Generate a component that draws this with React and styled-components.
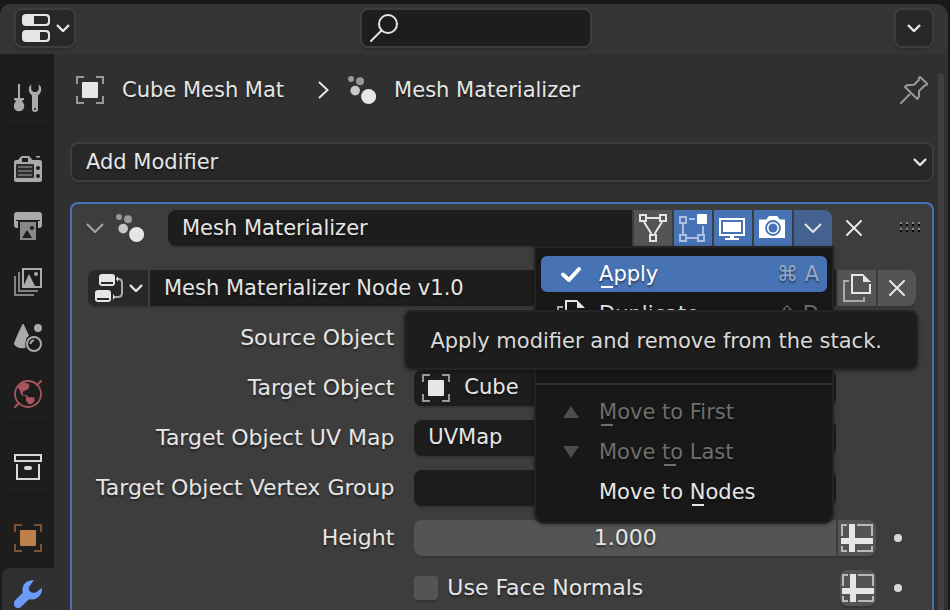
import React from 'react';
import styled, { createGlobalStyle, css } from 'styled-components';

const c = {
  window: '#181818',
  header: '#353535',
  body: '#303030',
  tabs: '#1d1d1d',
  panel: '#3d3d3d',
  menuBg: '#282828',
  field: '#1d1d1d',
  button: '#545454',
  blue: '#4772b3',
  text: '#e6e6e6',
  dim: '#999999',
};

const Global = createGlobalStyle`
  * { box-sizing: border-box; }
  html, body { margin: 0; background: ${c.window}; }
  body, button, input, select {
    font-family: "DejaVu Sans", sans-serif;
    font-size: 21px;
    line-height: 28px;
    color: ${c.text};
  }
  button, input, select { margin: 0; padding: 0; border: 0; border-radius: 0; outline: 0; background: none; }
  button { display: flex; align-items: center; justify-content: center; }
  svg { display: block; flex: none; }
`;

const textShadow = css`text-shadow: 0 2px 2px rgba(0, 0, 0, 0.45);`;
const dropLine = css`box-shadow: 0 2px 0 rgba(0, 0, 0, 0.14);`;

/* ---------- page frame ---------- */
const Window = styled.div`
  height: 100vh;
  overflow: hidden;
  padding: 4px 2px 0 0;
  display: flex;
  flex-direction: column;
`;
const EditorHeader = styled.header`
  display: grid;
  grid-template-columns: 1fr auto 1fr;
  align-items: start;
  height: 50px;
  flex: none;
  padding: 4px 14px 0;
  background: ${c.header};
  border-radius: 10px 12px 0 0;
`;
const HeaderButton = styled.button`
  justify-self: ${p => p.$end ? 'end' : 'start'};
  gap: 6px;
  width: ${p => p.$end ? 40 : 62}px;
  height: 40px;
  padding-left: ${p => p.$end ? 0 : 2}px;
  border: 2px solid #3d3d3d;
  border-radius: 8px;
  background: ${c.menuBg};
  ${dropLine}
`;
const SearchBox = styled.label`
  display: flex;
  align-items: center;
  width: 232px;
  height: 40px;
  margin-left: 4px;
  padding: 0 8px;
  border: 2px solid #3d3d3d;
  border-radius: 8px;
  background: ${c.field};
  ${dropLine}
`;
const SearchInput = styled.input`
  flex: 1;
  min-width: 0;
  padding-left: 8px;
`;
const EditorBody = styled.div`
  display: flex;
  flex: 1;
  min-height: 0;
`;

/* ---------- tabs ---------- */
const Tabs = styled.nav`
  display: flex;
  flex-direction: column;
  gap: 16px;
  flex: none;
  width: 54px;
  padding: 16px 0 0 2px;
  background: ${c.tabs};
`;
const TabGroup = styled.div`
  border-bottom-left-radius: 8px;
  box-shadow: 0 2px 0 #1a1a1a;
`;
const Tab = styled.button`
  width: 100%;
  height: 56px;
  border-radius: 8px 0 0 8px;
  background: ${p => p.$active ? c.body : 'none'};
`;
const ActiveTab = styled(Tab)`
  margin-top: 2px;
  height: 52px;
`;

/* ---------- content ---------- */
const Content = styled.main`
  flex: 1;
  min-width: 0;
  display: flex;
  flex-direction: column;
  padding: 18px 4px 0 16px;
  background: ${c.body};
`;
const ScrollTrack = styled.div`
  flex: none;
  padding: 19px 4px 0 0;
  background: ${c.body};
`;
const ScrollThumb = styled.div`
  width: 6px;
  height: 100%;
  border-radius: 3px 3px 0 0;
  background: #3f3f3f;
`;
const Breadcrumb = styled.div`
  display: flex;
  align-items: center;
  flex: none;
  height: 36px;
  padding: 0 6px;
  ${textShadow}
`;
const Crumb = styled.span`
  display: flex;
  align-items: center;
  gap: 18px;
  white-space: nowrap;
`;
const CrumbArrow = styled.span`
  padding: 0 19px 0 34px;
`;
const PinButton = styled.button`
  margin-left: auto;
`;
const AddModifier = styled.div`
  display: grid;
  align-items: center;
  flex: none;
  height: 40px;
  margin-top: 34px;
  border: 2px solid #3d3d3d;
  border-radius: 8px;
  background: ${c.menuBg};
  ${dropLine}
  > * { grid-area: 1 / 1; }
  > svg { justify-self: end; margin-right: 5px; pointer-events: none; }
`;
const AddSelect = styled.select`
  width: 100%;
  height: 36px;
  padding: 0 14px 0;
  appearance: none;
  ${textShadow}
`;

/* ---------- modifier panel ---------- */
const Panel = styled.section`
  flex: 1;
  min-height: 0;
  margin-top: 20px;
  padding-top: 6px;
  border: 2px solid ${c.blue};
  border-bottom: 0;
  border-radius: 8px 8px 0 0;
  background: ${c.panel};
`;
const PanelHeader = styled.div`
  display: flex;
  align-items: center;
  height: 36px;
  padding: 0 12px 0 14px;
`;
const PlainButton = styled.button`
  flex: none;
  width: ${p => p.$w}px;
  height: 36px;
`;
const TypeIcon = styled.span`
  margin: 0 24px 0 12px;
`;
const NameInput = styled.input`
  flex: 1;
  min-width: 0;
  height: 36px;
  padding: 0 14px;
  background: ${c.field};
  border-radius: ${p => p.$joined ? '0' : '8px 0 0 8px'};
  ${dropLine}
  ${textShadow}
`;
const ButtonStrip = styled.div`
  display: flex;
  gap: 2px;
  flex: none;
  margin: 0 4px 0 2px;
`;
const ModeButton = styled.button`
  width: 38px;
  height: 36px;
  background: ${p => p.$on ? c.blue : c.button};
`;
const MenuAnchor = styled.div`
  position: relative;
`;
const MenuButton = styled(ModeButton)`
  background: #446290;
  border-top-right-radius: 8px;
`;
const Grip = styled.span`
  margin-left: 28px;
`;
const PanelBody = styled.div`
  display: flex;
  flex-direction: column;
  gap: 14px;
  padding: 24px 16px 0;
`;
const Row = styled.div`
  display: flex;
  gap: 2px;
  height: 36px;
`;
const NodeTypeButton = styled.button`
  gap: 6px;
  width: 60px;
  height: 36px;
  padding-left: 2px;
  border-radius: 8px 0 0 8px;
  background: ${c.menuBg};
  ${dropLine}
`;
const EndButton = styled.button`
  flex: none;
  width: ${p => p.$single ? 36 : 38}px;
  height: 36px;
  margin-left: ${p => p.$single ? 2 : 0}px;
  border-radius: ${p => p.$single ? '8px' : p.$last ? '0 8px 8px 0' : '0'};
  background: ${c.button};
  ${dropLine}
`;
const Label = styled.label`
  flex: none;
  width: 37%;
  padding-top: 4px;
  font-size: 22px;
  text-align: right;
  white-space: nowrap;
  ${textShadow}
`;
const Slot = styled.div`
  display: flex;
  align-items: center;
  flex: 1;
  min-width: 0;
  margin-left: 18px;
`;
const FieldBox = styled(Slot)`
  gap: 14px;
  padding: ${p => p.$icon ? '0 8px' : '0 14px'};
  border-radius: ${p => p.$joined ? '8px 0 0 8px' : '8px'};
  background: ${p => p.$number ? c.button : c.field};
  ${dropLine}
`;
const FieldInput = styled.input`
  width: 100%;
  min-width: 0;
  height: 36px;
  padding-bottom: 2px;
  font-size: ${p => p.$center ? 22 : 21}px;
  text-align: ${p => p.$center ? 'center' : 'left'};
  ${textShadow}
`;
const CheckBox = styled.input.attrs({ type: 'checkbox' })`
  appearance: none;
  flex: none;
  width: 24px;
  height: 24px;
  border-radius: 4px;
  background: ${c.button};
  ${dropLine}
`;
const CheckLabel = styled.label`
  padding-left: 9px;
  font-size: 22px;
  white-space: nowrap;
  ${textShadow}
`;
const DotButton = styled.button`
  flex: none;
  width: 38px;
  height: 36px;
  padding-left: 2px;
`;
const EndSpace = styled.span`
  flex: none;
  width: 78px;
`;

/* ---------- popup menu ---------- */
const Menu = styled.div`
  position: absolute;
  z-index: 2;
  top: 100%;
  right: -2px;
  width: 300px;
  padding: 8px 5px;
  border: 2px solid #242424;
  border-radius: 0 0 10px 10px;
  background: ${c.window};
  box-shadow: 0 1px 4px rgba(0, 0, 0, 0.3);
`;
const MenuItem = styled.button`
  justify-content: flex-start;
  width: 100%;
  height: 36px;
  margin-bottom: 4px;
  padding: 0 8px 0 16px;
  border-radius: 6px;
  white-space: nowrap;
  color: ${p => p.$active ? '#ffffff' : p.disabled ? '#6e6e6e' : c.text};
  background: ${p => p.$active ? c.blue : 'none'};
  ${textShadow}
`;
const ItemIcon = styled.span`
  display: flex;
  justify-content: center;
  width: 28px;
  margin-right: 14px;
`;
const Shortcut = styled.span`
  margin-left: auto;
  color: ${p => p.$active ? '#98a9c6' : '#6e6e6e'};
`;
const Mnemonic = styled.span`
  position: relative;
  &::after {
    content: '';
    position: absolute;
    left: 2px;
    bottom: -2px;
    width: 12px;
    height: 2px;
    background: currentColor;
  }
`;
const Separator = styled.hr`
  height: 2px;
  margin: 51px -5px 9px;
  border: 0;
  background: #2e2e2e;
`;
const Tooltip = styled.div`
  position: absolute;
  z-index: 3;
  top: 62px;
  right: -86px;
  padding: 15px 34px 13px 24px;
  border: 2px solid #242424;
  border-radius: 8px;
  background: ${c.field};
  color: #d9d9d9;
  white-space: nowrap;
  box-shadow: 0 1px 4px rgba(0, 0, 0, 0.4);
  ${textShadow}
`;

/* ---------- icons ---------- */
const Icon = ({ w = 28, h = 28, children, ...rest }) => (
  <svg width={w} height={h} viewBox={`0 0 ${w} ${h}`} fill="none" aria-hidden="true" {...rest}>{children}</svg>
);
const Chevron = ({ big, color = c.text }) => big
  ? <Icon w={18} h={10}><path d="M1 1l8 8 8-8" stroke={color} strokeWidth="2" /></Icon>
  : <Icon w={14} h={8}><path d="M1 1l6 6 6-6" stroke={color} strokeWidth="2.4" /></Icon>;
const PropertiesIcon = () => (
  <Icon>
    <rect width="28" height="12" rx="4" fill={c.text} /><path d="M12 2h11a3 3 0 0 1 3 3v2a3 3 0 0 1-3 3H12z" fill={c.menuBg} />
    <rect y="16" width="28" height="12" rx="4" fill={c.text} /><path d="M18 18h5a3 3 0 0 1 3 3v2a3 3 0 0 1-3 3h-5z" fill={c.menuBg} />
  </Icon>
);
const SearchIcon = () => (
  <Icon><circle cx="18" cy="10" r="9" stroke={c.text} strokeWidth="2" /><path d="M11.5 16.500L1 27" stroke={c.text} strokeWidth="2" strokeLinecap="round" /></Icon>
);
const ObjectIcon = ({ edge = c.dim, fill = c.text }) => (
  <Icon><path d="M1 8V1h7M20 1h7v7M27 20v7h-7M8 27H1v-7" stroke={edge} strokeWidth="2" /><rect x="6" y="6" width="16" height="16" rx="1" fill={fill} /></Icon>
);
const ModifierDots = () => (
  <Icon>
    <circle cx="3" cy="3" r="3" fill={c.dim} /><circle cx="12" cy="5.300" r="4" fill={c.dim} />
    <circle cx="7.200" cy="14.600" r="4.800" fill="#c8c8c8" /><circle cx="20.600" cy="20.500" r="7.500" fill={c.text} />
  </Icon>
);
const PinIcon = () => (
  <Icon>
    <path d="M20 1L27 7.500Q27.500 9 25 9.200L19 15V20.500L17.300 23L5 11L7 9.200L14 8.700L18.800 4V2Z" stroke={c.dim} strokeWidth="2" strokeLinejoin="round" />
    <path d="M1 27l8.500-8.500" stroke={c.dim} strokeWidth="2" strokeLinecap="round" />
  </Icon>
);
const g = '#aaaaaa';
const ToolIcon = () => (
  <Icon>
    <path d="M4 0h2v14h4v2H8.500v2A5.300 5.300 0 1 1 1.500 18v-2H0v-2h4z" fill={g} />
    <path d="M17.200.3A7 7 0 0 0 18 11.500V25a3 3 0 0 0 6 0V11.500A7 7 0 0 0 24.800.3V5.500L22.800 8h-3.600L17.200 5.500z" fill={g} />
    <circle cx="21" cy="25" r="1" fill={c.tabs} />
  </Icon>
);
const RenderIcon = () => (
  <Icon>
    <path d="M2 4h2l3-3.500Q7.500 0 8.500 0h5.500q1 0 1.500.5L18.500 4H26a2 2 0 0 1 2 2v18a2 2 0 0 1-2 2H2a2 2 0 0 1-2-2V6a2 2 0 0 1 2-2zM22 0h4v1.500h-4z" fill={g} />
    <path d="M8 2h6v4H8z" fill={c.tabs} />
    <rect x="2" y="8" width="18" height="14" rx="1" fill="#2c2c2c" />
    <path d="M4 11h14M4 15h14M4 19h14" stroke="#686868" strokeWidth="2" />
    <circle cx="24" cy="12" r="2" fill={c.tabs} /><circle cx="24" cy="20" r="2" fill={c.tabs} />
  </Icon>
);
const OutputIcon = () => (
  <Icon>
    <path d="M3 0h22a3 3 0 0 1 3 3v10a3 3 0 0 1-3 3h-1V9h2V8H2v1h2v7H3a3 3 0 0 1-3-3V3a3 3 0 0 1 3-3z" fill={g} />
    <path d="M6 10h16v18H6z" fill="#888" />
    <path d="M8 26l5-8 5 8z" fill={c.tabs} /><circle cx="18" cy="16" r="2" fill={c.tabs} />
  </Icon>
);
const ViewLayerIcon = () => (
  <Icon>
    <path d="M1 8v19h19M5 4v19h19" stroke="#828282" strokeWidth="2" />
    <rect x="9" y="1" width="18" height="18" fill={c.tabs} stroke={g} strokeWidth="2" />
    <path d="M9 19l6-13 6.500 13z" fill={g} /><circle cx="22" cy="6" r="2" fill={g} />
  </Icon>
);
const SceneIcon = () => (
  <Icon>
    <path d="M9 0C10 0 10 1 15 11.500Q10.500 15 11.500 24Q2 25 0 20Q0 18 8 1Q8.500 0 9 0z" fill={g} />
    <circle cx="24" cy="4" r="4" fill={g} /><circle cx="20" cy="20" r="7" stroke={g} strokeWidth="2" />
    <path d="M16.500 20a3.500 3.500 0 0 1 3.500-3.500" stroke={g} strokeWidth="2" />
  </Icon>
);
const WorldIcon = () => (
  <Icon>
    <circle cx="14" cy="14" r="13" stroke="#aa555d" strokeWidth="1.800" />
    <path d="M1 27l4-4M23 5l4-4" stroke="#aa555d" strokeWidth="2" strokeLinecap="round" />
    <path d="M3.500 7L9 2.500l5 1 1.500 1.500-1 4L10 11l-1.500 1.500 1 2.500 4 .5v1.500l7 .5v3.500l-2.500 3h-3.500l-2.500-3.500v-4L7.500 15 5.500 10z" fill="#aa555d" />
  </Icon>
);
const CollectionIcon = () => (
  <Icon>
    <rect x="1" y="3" width="26" height="6" stroke="#d8d8d8" strokeWidth="2" />
    <path d="M3 12v15h22V12" stroke="#d8d8d8" strokeWidth="2" /><rect x="10" y="14" width="8" height="4" rx="2" fill="#d8d8d8" />
  </Icon>
);
const WrenchIcon = () => (
  <Icon><path d="M20 .3C12.500-.5 7 5 8.800 12.800L1 20.500a4.300 4.300 0 0 0 6.200 6.300L15 19.200C23 21 28.500 15 28 7.800L22.500 12C17 15 12.500 9.500 16 5.500z" fill="#6d9cf8" /></Icon>
);
const VertexGroupIcon = () => (
  <Icon><path d="M1 1h6v6H1zM21 1h6v6h-6zM11 21h6v6h-6zM8 4h12M5 8l7.500 12M23 8l-7.500 12" stroke={c.text} strokeWidth="2" /></Icon>
);
const EditModeIcon = () => (
  <Icon><path d="M1 3h6v6H1zM1 21h6v6H1zM19 21h6v6h-6zM10 5h6M4 10v10M8 24h10M24 12v8" stroke="#aabfe2" strokeWidth="2" /><rect x="18" width="10" height="10" rx="1" fill="#fff" /></Icon>
);
const MonitorIcon = () => (
  <Icon><rect x="1" y="5" width="24" height="16" stroke="#fff" strokeWidth="2" /><path d="M4 8h18v10H4zM11 22h4v2h5v2H6v-2h5z" fill="#fff" /></Icon>
);
const CameraIcon = () => (
  <Icon>
    <path d="M0 5.500h7.500L9 3q.5-1 1.500-1h7q1 0 1.500 1l1.500 2.500H26V24H0z" fill="#fff" />
    <circle cx="14" cy="14" r="7" stroke={c.blue} strokeWidth="1.800" /><circle cx="14" cy="14" r="4.500" fill={c.blue} />
  </Icon>
);
const CrossIcon = () => <Icon w={16} h={16}><path d="M1 1l14 14M15 1L1 15" stroke={c.text} strokeWidth="2" strokeLinecap="round" /></Icon>;
const GripIcon = () => (
  <Icon w={20} h={12}>
    {[0, 6].map(y => [0, 6, 12, 18].map(x => (
      <g key={`${x}-${y}`}><rect x={x} y={y} width="2" height="2" fill="#858585" /><rect x={x} y={y + 2} width="2" height="2" fill="#080808" /></g>
    )))}
  </Icon>
);
const NodesIcon = () => (
  <Icon>
    <path d="M21 5h2q4 0 4 4v10q0 4-4 4h-5" stroke={g} strokeWidth="2" />
    <rect x="4" width="16" height="12" rx="3" fill={c.text} /><path d="M6 8h12v2H6z" fill={c.menuBg} />
    <rect y="16" width="16" height="12" rx="3" fill={c.text} /><path d="M2 24h12v2H2z" fill={c.menuBg} />
    <path d="M22 2q3 3 0 6zM18 20q3 3 0 6z" fill={c.text} />
  </Icon>
);
const CopyIcon = () => (
  <Icon>
    <path d="M6 7H1v20h20v-4" stroke={g} strokeWidth="2" />
    <path d="M20 1H9v18h18v-9" stroke={c.text} strokeWidth="2" /><path d="M20 0l8 8h-8z" fill={c.text} />
  </Icon>
);
const SpreadsheetIcon = () => (
  <Icon w={32}>
    <path d="M1 12V1h5M16 1h15v11M1 22v5h5M16 27h15v-5" stroke="#b8b8b8" strokeWidth="2" />
    <path d="M8 0h6v14h18v6H14v8H8v-8H0v-6h8z" fill={c.text} />
  </Icon>
);
const DotIcon = () => <Icon w={8} h={8}><circle cx="4" cy="4" r="4" fill="#d9d9d9" /></Icon>;

function ModifierMenu() {
  return (
    <Menu role="menu">
      <MenuItem role="menuitem" $active aria-describedby="apply-tip">
        <ItemIcon><Icon w={20} h={16}><path d="M2 8.500l6 5.500L18 3" stroke="#fff" strokeWidth="4" strokeLinecap="round" strokeLinejoin="round" /></Icon></ItemIcon>
        <span><Mnemonic>A</Mnemonic>pply</span><Shortcut $active>⌘ A</Shortcut>
      </MenuItem>
      <MenuItem role="menuitem"><ItemIcon><CopyIcon /></ItemIcon>Duplicate<Shortcut>⇧ D</Shortcut></MenuItem>
      <Separator />
      <MenuItem role="menuitem" disabled>
        <ItemIcon><Icon w={16} h={12}><path d="M8 0l8 12H0z" fill="#4d4d4d" /></Icon></ItemIcon>
        <span><Mnemonic>M</Mnemonic>ove to First</span>
      </MenuItem>
      <MenuItem role="menuitem" disabled>
        <ItemIcon><Icon w={16} h={12}><path d="M0 0h16L8 12z" fill="#4d4d4d" /></Icon></ItemIcon>
        <span>Move <Mnemonic>t</Mnemonic>o Last</span>
      </MenuItem>
      <MenuItem role="menuitem"><ItemIcon /><span>Move to <Mnemonic>N</Mnemonic>odes</span></MenuItem>
      <Tooltip id="apply-tip" role="tooltip">Apply modifier and remove from the stack.</Tooltip>
    </Menu>
  );
}

function FieldRow({ id, label, value, icon, number }) {
  return (
    <Row>
      <Label htmlFor={id}>{label}</Label>
      <FieldBox $icon={!!icon} $number={number} $joined={number}>
        {icon}
        <FieldInput id={id} defaultValue={value} $center={number} />
      </FieldBox>
      {number
        ? <><EndButton $last aria-label={`${label} attribute`}><SpreadsheetIcon /></EndButton><DotButton aria-label={`Animate ${label}`}><DotIcon /></DotButton></>
        : <EndSpace />}
    </Row>
  );
}

export default function App() {
  return (
    <>
      <Global />
      <Window>
        <EditorHeader>
          <HeaderButton aria-label="Editor type"><PropertiesIcon /><Chevron /></HeaderButton>
          <SearchBox><SearchIcon /><SearchInput type="text" aria-label="Search" /></SearchBox>
          <HeaderButton $end aria-label="Options"><Chevron /></HeaderButton>
        </EditorHeader>
        <EditorBody>
          <Tabs aria-label="Properties">
            <TabGroup><Tab aria-label="Tool"><ToolIcon /></Tab></TabGroup>
            <TabGroup>
              <Tab aria-label="Render"><RenderIcon /></Tab>
              <Tab aria-label="Output"><OutputIcon /></Tab>
              <Tab aria-label="View layer"><ViewLayerIcon /></Tab>
              <Tab aria-label="Scene"><SceneIcon /></Tab>
              <Tab aria-label="World"><WorldIcon /></Tab>
            </TabGroup>
            <TabGroup><Tab aria-label="Collection"><CollectionIcon /></Tab></TabGroup>
            <TabGroup>
              <Tab aria-label="Object"><ObjectIcon edge="#7c5435" fill="#be7f4a" /></Tab>
              <ActiveTab $active aria-label="Modifiers"><WrenchIcon /></ActiveTab>
            </TabGroup>
          </Tabs>
          <Content>
            <Breadcrumb>
              <Crumb><ObjectIcon />Cube Mesh Mat</Crumb>
              <CrumbArrow><Icon w={11} h={18}><path d="M1 1l8.500 8L1 17" stroke={c.text} strokeWidth="2" /></Icon></CrumbArrow>
              <Crumb><ModifierDots />Mesh Materializer</Crumb>
              <PinButton aria-label="Pin"><PinIcon /></PinButton>
            </Breadcrumb>
            <AddModifier>
              <AddSelect aria-label="Add Modifier"><option>Add Modifier</option></AddSelect>
              <Chevron />
            </AddModifier>
            <Panel>
              <PanelHeader>
                <PlainButton $w={18} aria-label="Collapse"><Chevron big color="#a5a5a5" /></PlainButton>
                <TypeIcon><ModifierDots /></TypeIcon>
                <NameInput aria-label="Modifier name" defaultValue="Mesh Materializer" />
                <ButtonStrip>
                  <ModeButton aria-label="On cage"><VertexGroupIcon /></ModeButton>
                  <ModeButton $on aria-label="Edit mode"><EditModeIcon /></ModeButton>
                  <ModeButton $on aria-label="Realtime"><MonitorIcon /></ModeButton>
                  <ModeButton $on aria-label="Render"><CameraIcon /></ModeButton>
                  <MenuAnchor>
                    <MenuButton aria-label="Modifier options" aria-expanded="true"><Chevron big /></MenuButton>
                    <ModifierMenu />
                  </MenuAnchor>
                </ButtonStrip>
                <PlainButton $w={36} aria-label="Remove modifier"><CrossIcon /></PlainButton>
                <Grip><GripIcon /></Grip>
              </PanelHeader>
              <PanelBody>
                <Row>
                  <NodeTypeButton aria-label="Browse node groups"><NodesIcon /><Chevron /></NodeTypeButton>
                  <NameInput $joined aria-label="Node group" defaultValue="Mesh Materializer Node v1.0" />
                  <EndButton aria-label="New node group"><CopyIcon /></EndButton>
                  <EndButton $last aria-label="Unlink"><CrossIcon /></EndButton>
                </Row>
                <FieldRow id="source" label="Source Object" />
                <FieldRow id="target" label="Target Object" value="Cube" icon={<ObjectIcon />} />
                <FieldRow id="uvmap" label="Target Object UV Map" value="UVMap" />
                <FieldRow id="vgroup" label="Target Object Vertex Group" />
                <FieldRow id="height" label="Height" value="1.000" number />
                <Row>
                  <Label as="span" />
                  <Slot><CheckBox id="normals" /><CheckLabel htmlFor="normals">Use Face Normals</CheckLabel></Slot>
                  <EndButton $single aria-label="Face normals attribute"><SpreadsheetIcon /></EndButton>
                  <DotButton aria-label="Animate face normals"><DotIcon /></DotButton>
                </Row>
              </PanelBody>
            </Panel>
          </Content>
          <ScrollTrack><ScrollThumb /></ScrollTrack>
        </EditorBody>
      </Window>
    </>
  );
}
